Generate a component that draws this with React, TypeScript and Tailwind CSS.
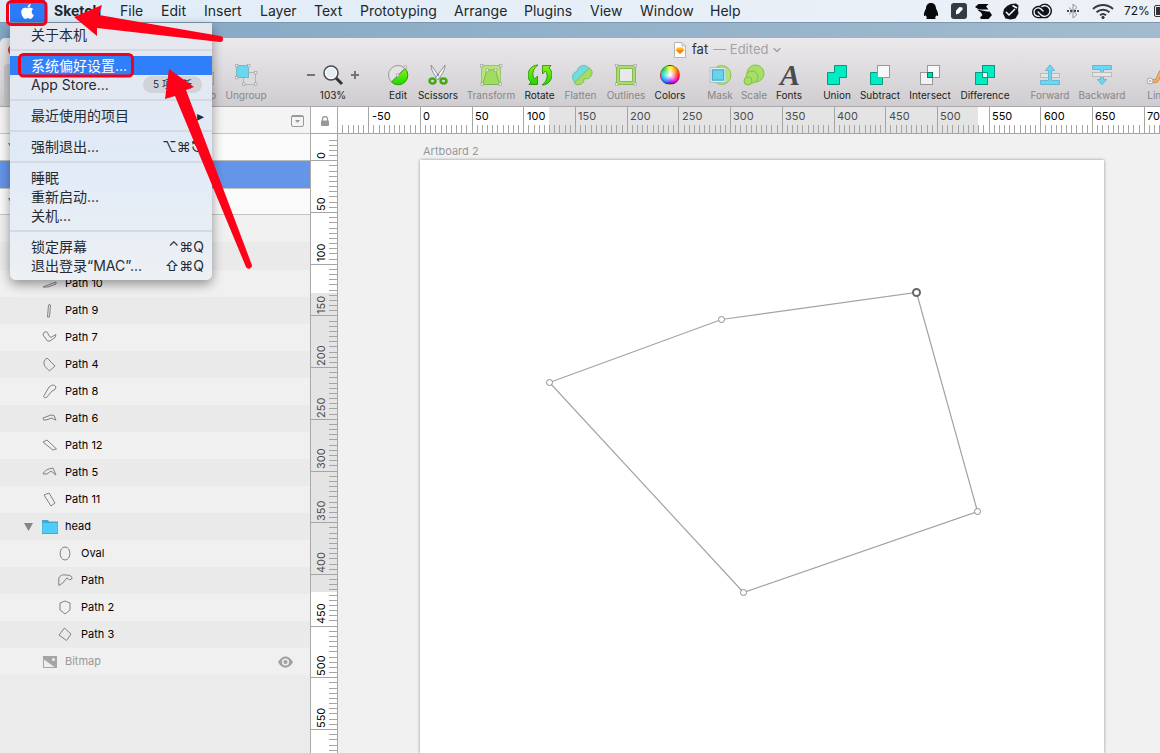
import React from "react";
import { FaApple } from "react-icons/fa";
import { SiAdobecreativecloud } from "react-icons/si";
import { ChevronDown } from "lucide-react";

const menus = [
  { label: "Sketch", cls: "w-[66px] font-bold" },
  { label: "File", cls: "w-[41px]" },
  { label: "Edit", cls: "w-[43px]" },
  { label: "Insert", cls: "w-[56px]" },
  { label: "Layer", cls: "w-[54px]" },
  { label: "Text", cls: "w-[46px]" },
  { label: "Prototyping", cls: "w-[94px]" },
  { label: "Arrange", cls: "w-[70px]" },
  { label: "Plugins", cls: "w-[66px]" },
  { label: "View", cls: "w-[50px]" },
  { label: "Window", cls: "w-[70px]" },
  { label: "Help", cls: "w-[40px]" },
];

function MenuBar() {
  return (
    <header className="flex h-[23px] items-center overflow-hidden whitespace-nowrap border-b border-[#7d97ae] bg-linear-to-r from-[#dfecf7] to-[#edf1f7] text-[14px] leading-[22px] text-[#20272e]">
      <button aria-label="Apple" className="ml-[10px] flex h-[22px] w-[35px] shrink-0 items-center justify-center bg-[#2b7bfb] text-white">
        <FaApple size={17} />
      </button>
      <nav className="ml-[9px] flex shrink-0">
        {menus.map((m) => (
          <button key={m.label} className={`text-left ${m.cls}`}>{m.label}</button>
        ))}
      </nav>
      <div className="ml-[173px] flex shrink-0 items-center text-[#11151a]">
        <svg width="16" height="18" viewBox="0 0 16 18" fill="#07090b" aria-hidden="true">
          <path d="M8 1C4.500 1 3 3.500 3 6.500c-1.500 3-2.500 5-2 7.500.6.300 1.300-.2 1.800-.8.200.9.600 1.500 1.200 2-1 .4-1 1.800.3 1.800H11.700c1.300 0 1.300-1.400.3-1.800.6-.5 1-1.100 1.200-2 .5.600 1.200 1.100 1.800.8.500-2.500-.5-4.500-2-7.500C13 3.500 11.500 1 8 1z" />
        </svg>
        <svg className="ml-[12px]" width="16" height="16" viewBox="0 0 16 16" aria-hidden="true">
          <rect width="16" height="16" rx="3" fill="#353b43" />
          <path d="M5 11.500V7.500L8.500 4l3 .5v2L8 10.500z" fill="#fff" />
        </svg>
        <svg className="ml-[8px]" width="17" height="16" viewBox="0 0 17 16" fill="#07090b" aria-hidden="true">
          <path d="M3.500 1h10L11 3.500 13.500 6.500H4L0 4z" />
          <path d="M2 6.500l10 2h2.500L17 12l-3.500 4H6l-1-1.500L7.500 12 6 9.500z" />
        </svg>
        <svg className="ml-[10px]" width="18" height="17" viewBox="0 0 18 17" aria-hidden="true">
          <path d="M5 3L9 1l5-.5 2.500 2-.5 4 .5 4-3 5-5 1-5-1-2.500-5 1-4.500z" fill="#101419" />
          <path d="M4 9l3 3 6-6M10.500 2.500L15 5" stroke="#fff" strokeWidth="1.500" fill="none" />
        </svg>
        <SiAdobecreativecloud className="ml-[12px]" size={20} />
        <svg className="ml-[15px]" width="12" height="16" viewBox="0 0 12 16" fill="none" stroke="#8f959b" aria-hidden="true">
          <path d="M2 4.500l8 7-4 3.500V1l4 3.500-8 7" />
          <path d="M0 8h2M3 8h2M7 8h2M10 8h2" stroke="#454b51" strokeWidth="2" />
        </svg>
        <svg className="ml-[13px]" width="22" height="17" viewBox="0 0 22 17" fill="none" stroke="#353a40" strokeWidth="2" aria-hidden="true">
          <path d="M1 6C7 .8 15 .8 21 6M4.500 9.300c3.800-3.400 9.200-3.400 13 0M8 12.300c1.800-1.500 4.200-1.500 6 0" />
          <circle cx="11" cy="14.500" r="1.200" fill="#353a40" strokeWidth="1" />
        </svg>
        <span className="ml-[10px] text-[12px]">72%</span>
        <span className="ml-[4px] h-[12px] w-[24px] shrink-0 rounded-[2px] border border-[#333] p-px"><span className="block h-full w-[14px] bg-[#333]" /></span>
      </div>
    </header>
  );
}

const node = (x: number, y: number) => <rect key={`${x}-${y}`} x={x - 1} y={y - 1} width="2.400" height="2.400" fill="#f1f1f1" stroke="#a5a3a6" strokeWidth=".7" />;

function ToolIcon({ name }: { name: string }) {
  const shapes: Record<string, React.ReactNode> = {
    Ungroup: (
      <g>
        <rect x="8.500" y="8.500" width="12" height="12" fill="#dcdbdc" stroke="#b5b4b6" />
        <rect x="1.500" y="1.500" width="12" height="12" fill="#67d8ef" stroke="#7ab6c3" />
        {node(1.5, 1.5)}{node(13.5, 1.5)}{node(1.5, 13.5)}{node(20.5, 8.5)}{node(8.5, 20)}{node(20.5, 20)}
      </g>
    ),
    Group: (
      <g><rect x="1.500" y="1.500" width="12" height="12" fill="#67d8ef" stroke="#7ab6c3" /><rect x="8.500" y="8.500" width="12" height="12" fill="#dcdbdc" stroke="#b5b4b6" /></g>
    ),
    Edit: (
      <g>
        <circle cx="11" cy="11" r="9.500" fill="#e4e3e4" stroke="#999" />
        <path d="M18 4.500A9.500 9.500 0 0 1 4.500 18z" fill="url(#green)" stroke="#27a500" />
        <path d="M4.500 18L18 4" stroke="#7a9a70" strokeWidth=".8" />
        {node(18, 3)}{node(10.5, 11)}
      </g>
    ),
    Scissors: (
      <g>
        <path d="M4 1l9.500 13-2 1.500C7 11 4 6 4 1z" fill="#edf0f1" stroke="#777d80" strokeWidth=".8" />
        <path d="M18 1L8.500 14l2 1.500C15 11 18 6 18 1z" fill="#f4f5f5" stroke="#777d80" strokeWidth=".8" />
        <ellipse cx="5.500" cy="17" rx="2.900" ry="2.500" fill="none" stroke="#43a813" strokeWidth="2.600" />
        <ellipse cx="16.500" cy="17" rx="2.900" ry="2.500" fill="none" stroke="#43a813" strokeWidth="2.600" />
        <circle cx="11" cy="11" r="1" fill="#777" />
      </g>
    ),
    Transform: (
      <g>
        <rect x="1.500" y="1.500" width="19" height="19" fill="#b4e577" stroke="#9bc270" />
        <path d="M7 6h8.500l4 14.500h-17z" fill="#a0dc61" stroke="#7fb550" />
        {node(1.5, 1.5)}{node(20.5, 1.5)}{node(7, 6)}{node(15.5, 6)}{node(2, 20)}{node(20, 20)}
      </g>
    ),
    Rotate: (
      <g fill="url(#green)" stroke="#24870b" strokeWidth=".8">
        <path d="M9 1C3 1-1 6-1 11c0 3 1 5.500 3 7l-2 2.500h8.500V12L5.500 15C3 12 3 5 9 1z" />
        <path d="M13 21c6 0 10-5 10-10 0-3-1-5.500-3-7l2-2.500h-8.500V10l3-3c2.500 3 2.500 10-3.500 14z" />
      </g>
    ),
    Flatten: (
      <g>
        <path d="M14 1.500a6 6 0 0 1 5 9 6 6 0 0 1-5 4 5.800 5.800 0 1 1-7-7 6.500 6.500 0 0 1 7-6z" fill="#70dce0" stroke="#65bfbd" />
        <path d="M19.500 4a6 6 0 0 1-5.500 10.500A5.800 5.800 0 0 1 4 19z" fill="#a4dc67" stroke="#82bd5c" />
      </g>
    ),
    Outlines: (
      <g>
        <rect x="3" y="3" width="16" height="16" fill="#e9e8e9" stroke="#7bb34f" strokeWidth="4" />
        <rect x="3" y="3" width="16" height="16" fill="none" stroke="#a8dd6d" strokeWidth="2.400" />
        {node(1.5, 1.5)}{node(20, 1.5)}{node(1.5, 20)}{node(20, 20)}
      </g>
    ),
    Mask: (
      <g>
        <circle cx="12.500" cy="11" r="9.500" fill="#b5e572" stroke="#8bc260" />
        <rect x="2" y="4.500" width="14" height="13" fill="#68d4ec" stroke="#a7b3b5" strokeWidth="2.600" />
        <rect x="2" y="4.500" width="14" height="13" fill="#68d4ec" stroke="#e0ecec" strokeWidth="1.200" />
        <rect x="3.500" y="6" width="11" height="10" fill="#68d4ec" stroke="#55a5cf" />
      </g>
    ),
    Scale: (
      <g fill="#a6df65" stroke="#82be51">
        <circle cx="12.500" cy="9.500" r="8.500" /><circle cx="9" cy="13" r="6" /><circle cx="5" cy="17" r="4" />
      </g>
    ),
    Union: <path d="M8.500 1.500h12v12h-7v7h-12v-12h7z" fill="#00edc4" stroke="#049b7e" />,
    Subtract: (
      <g><path d="M1.500 8.500h7v5h5v7h-12z" fill="#00edc4" stroke="#049b7e" /><rect x="8.500" y="1.500" width="12" height="12" fill="#f8f8f8" stroke="#999" /></g>
    ),
    Intersect: (
      <g><rect x="1.500" y="8.500" width="12" height="12" fill="#f2f2f2" stroke="#999" /><rect x="8.500" y="1.500" width="12" height="12" fill="#f8f8f8" stroke="#999" /><rect x="8.500" y="8.500" width="5" height="5" fill="#00dfb4" stroke="#067f68" /></g>
    ),
    Difference: (
      <g fill="#00edc4" stroke="#049b7e"><rect x="1.500" y="8.500" width="12" height="12" /><rect x="8.500" y="1.500" width="12" height="12" /><rect x="8.500" y="8.500" width="5" height="5" fill="#f6f8f8" /></g>
    ),
    Forward: (
      <g stroke="#67b8d1" fill="#67d8f5"><rect x="1.500" y="9.500" width="19" height="4" fill="#e5e5e6" stroke="#bbb" /><path d="M1.500 16.500h8v-10h-3L11 .8l4.500 5.700h-3v10h8v4h-19z" /></g>
    ),
    Backward: (
      <g stroke="#67b8d1" fill="#67d8f5"><path d="M1.500 1.500h19v4h-8v10h3L11 20.700l-4.500-5.200h3v-10h-8z" /><rect x="1.500" y="8.500" width="19" height="4" fill="#e5e5e6" stroke="#bbb" /></g>
    ),
    Link: (
      <g fill="none"><path d="M6 17c10 2 3-11 16-12" stroke="#c88647" strokeWidth="4" /><path d="M6 17c10 2 3-11 16-12" stroke="#f4ac64" strokeWidth="2.500" /><circle cx="4" cy="17" r="3" fill="#eee" stroke="#aaa" /><circle cx="4" cy="17" r="1" fill="#aaa" /></g>
    ),
  };
  if (name === "Colors")
    return <span className="h-[20px] w-[20px] rounded-full border border-black/30 bg-[radial-gradient(circle,#fff_5%,transparent_65%),conic-gradient(#ff3,#f90,#f22,#f0c,#60f,#28f,#0de,#2d4,#ff3)]" />;
  if (name === "Fonts")
    return <span className="pl-[2px] font-['Liberation_Serif',serif] text-[30px] font-bold italic leading-[22px] text-[#4b4b4e]">A</span>;
  return (
    <svg width="24" height="22" viewBox="-1 0 24 22" aria-hidden="true">
      <defs>
        <linearGradient id="green" x1="0" y1="0" x2="0" y2="1"><stop stopColor="#8bef1c" /><stop offset="1" stopColor="#19d900" /></linearGradient>
      </defs>
      {shapes[name]}
    </svg>
  );
}

const tools = [
  { name: "Edit", cls: "w-[34px] text-[#1c1c1e]" },
  { name: "Scissors", cls: "w-[46px] text-[#1c1c1e]" },
  { name: "Transform", cls: "w-[60px] text-[#88868a]" },
  { name: "Rotate", cls: "w-[37px] text-[#1c1c1e]" },
  { name: "Flatten", cls: "w-[45px] text-[#88868a]" },
  { name: "Outlines", cls: "w-[46px] text-[#88868a]" },
  { name: "Colors", cls: "w-[42px] text-[#1c1c1e]" },
  { name: "Mask", cls: "ml-[12px] w-[34px] text-[#88868a]" },
  { name: "Scale", cls: "w-[34px] text-[#88868a]" },
  { name: "Fonts", cls: "w-[36px] text-[#1c1c1e]" },
  { name: "Union", cls: "ml-[12px] w-[36px] text-[#1c1c1e]" },
  { name: "Subtract", cls: "w-[50px] text-[#1c1c1e]" },
  { name: "Intersect", cls: "w-[50px] text-[#1c1c1e]" },
  { name: "Difference", cls: "w-[60px] text-[#1c1c1e]" },
  { name: "Forward", cls: "ml-[12px] w-[46px] text-[#88868a]" },
  { name: "Backward", cls: "w-[58px] text-[#88868a]" },
  { name: "Link", cls: "w-[52px] text-[#88868a]" },
];

function Toolbar() {
  return (
    <div className="flex h-[69px] shrink-0 flex-col border-b border-[#aaa8aa] bg-linear-to-b from-[#ebe9eb] to-[#cfcdcf]">
      <div className="flex h-[23px] shrink-0 items-center pl-[8px] text-[13px] text-[#303033]">
        <button aria-label="Close" className="h-[12px] w-[12px] rounded-full border border-[#d03c3c] bg-[#f2585a]" />
        <svg className="ml-[654px]" width="12" height="16" viewBox="0 0 12 16" aria-hidden="true">
          <path d="M.5.500h7.500l3.500 3.500v11.500H.5z" fill="#fff" stroke="#b5b5b5" /><path d="M8 .5v3.500h3.500" fill="none" stroke="#b5b5b5" />
          <path d="M3.500 5.500h5L10.300 8 6 12 1.700 8z" fill="#fdb81e" /><path d="M1.700 8h8.600L6 12z" fill="#f88908" />
        </svg>
        <span className="ml-[6px]">fat</span>
        <span className="ml-[5px] text-[#a5a2a6]">— Edited</span>
        <ChevronDown className="ml-[3px] text-[#a5a2a6]" size={12} strokeWidth={3} />
      </div>
      <div className="flex h-[45px] shrink-0 whitespace-nowrap pl-[4px] pt-[3px] text-[10px] leading-[16px]">
        <div className="h-[42px] w-[171px] shrink-0 rounded-tl-[4px] bg-[#c9c7ca]" />
        <button className="flex w-[44px] shrink-0 flex-col items-end gap-[1px] pr-[3px] text-[#88868a]"><ToolIcon name="Group" /><span>Group</span></button>
        <button className="flex w-[54px] shrink-0 flex-col items-center gap-[1px] text-[#88868a]"><ToolIcon name="Ungroup" /><span>Ungroup</span></button>
        <div className="ml-[33px] flex w-[54px] shrink-0 flex-col items-center gap-[1px] text-[#1c1c1e]">
          <div className="flex h-[22px] items-center gap-[7px]">
            <button aria-label="Zoom out" className="h-[2px] w-[8px] bg-[#747477]" />
            <svg width="22" height="22" viewBox="0 0 22 22" aria-hidden="true"><path d="M14 14l6 6" stroke="#333" strokeWidth="3" /><circle cx="9" cy="9" r="7" fill="#e6edf5" stroke="#4b4c50" strokeWidth="1.500" /><circle cx="9" cy="9" r="5.500" fill="none" stroke="#fff" /></svg>
            <button aria-label="Zoom in"><svg width="8" height="8" viewBox="0 0 8 8"><path d="M0 4h8M4 0v8" stroke="#747477" strokeWidth="2" /></svg></button>
          </div>
          <span>103%</span>
        </div>
        <div className="ml-[21px] flex shrink-0">
          {tools.map((t) => (
            <button key={t.name} className={`flex shrink-0 flex-col items-center gap-[1px] ${t.cls}`}>
              <span className="flex h-[22px] items-center"><ToolIcon name={t.name} /></span>
              <span>{t.name}</span>
            </button>
          ))}
        </div>
      </div>
    </div>
  );
}

const layers = [
  { name: "Path 10", d: "M1 11l13-5v2L6 11z" },
  { name: "Path 9", d: "M6.500 2q2-1 2 0l-1 12h-2z" },
  { name: "Path 7", d: "M1 5q0-3 3-3.500Q6 2 6.500 5l2 2.500L14 4.500l-1 3-5 3.500q-3 1-4-2z" },
  { name: "Path 4", d: "M5 1l8 8-5.500 5L3 9.500Q0 4 5 1z" },
  { name: "Path 8", d: "M7 3q5-4 7 0 0 3-4 4l-5.500 6.500q-2 .8-3-1z" },
  { name: "Path 6", d: "M1 7l8-3 3 .5 2 4.500q-2 0-4-2L4 9q-3 1-3-2z" },
  { name: "Path 12", d: "M1 4l4-2 9.500 9-4 .8z" },
  { name: "Path 5", d: "M1 9q2-5 10-6l3 7-5-4-4 3z" },
  { name: "Path 11", d: "M2 3l5-2 6 10-4 3z" },
];
const headLayers = [
  { name: "Oval", d: "M7 1c6.500 0 6.500 13 0 13S.500 1 7 1z" },
  { name: "Path", d: "M.8 12.500V5q2-4 7-3 7 0 6 4-2 2-5-1l-4 5z" },
  { name: "Path 2", d: "M2 3l5-2 5 2v7l-5 4-5-4z" },
  { name: "Path 3", d: "M6.500 1l6.500 6-4.500 6.500L1 8z" },
];

function LayerRow({ name, d, index, cls }: { name: string; d: string; index: number; cls: string }) {
  return (
    <li className={`flex h-[27px] items-center gap-[8px] ${cls} ${index % 2 ? "bg-[#eaeaea]" : "bg-[#f0f0f0]"}`}>
      <svg width="15" height="15" viewBox="0 0 15 15" aria-hidden="true"><path d={d} fill="none" stroke="#818181" /></svg>
      <button>{name}</button>
    </li>
  );
}

function Sidebar() {
  return (
    <aside className="flex w-[311px] shrink-0 flex-col border-r border-[#aaa] bg-[#ebebeb] text-[11px] text-black">
      <div className="flex h-[27px] items-center justify-end border-b border-[#c5c5c5] bg-[#f4f4f4] pr-[6px] pt-[2px]">
        <button aria-label="Pages"><svg width="13" height="12" viewBox="0 0 13 12"><rect x=".5" y=".5" width="12" height="11" rx="1.500" fill="none" stroke="#999" /><path d="M1 1.500h11" stroke="#999" /><path d="M4 5h5L6.500 8z" fill="#999" /></svg></button>
      </div>
      <div className="flex h-[27px] items-center border-b border-[#bbb] bg-[#fafafa] pl-[8px]"><svg width="9" height="8" viewBox="0 0 9 8" aria-hidden="true"><path d="M0 0h9L4.500 8z" fill="#858585" /></svg></div>
      <div className="h-[28px] border-b border-[#c5c5c5] bg-[#6495e8]" />
      <div className="flex h-[26px] items-center border-b border-[#c5c5c5] bg-[#fafafa] pl-[8px]"><svg width="9" height="8" viewBox="0 0 9 8" aria-hidden="true"><path d="M0 0h9L4.500 8z" fill="#858585" /></svg></div>
      <div className="h-[27px] bg-[#f0f0f0]" />
      <div className="h-[28px] bg-[#eaeaea]" />
      <ul>
        {layers.map((l, i) => <LayerRow key={l.name} {...l} index={i} cls="pl-[42px]" />)}
        <li className="flex h-[27px] items-center bg-[#eaeaea] pl-[24px]">
          <svg width="9" height="8" viewBox="0 0 9 8" aria-hidden="true"><path d="M0 0h9L4.500 8z" fill="#858585" /></svg>
          <svg className="ml-[9px]" width="16" height="14" viewBox="0 0 16 14" aria-hidden="true"><path d="M0 0h6l1 1.500h9V14H0z" fill="#42a9d3" /><path d="M.5 3h15v10H.5z" fill="#4dcdfc" /></svg>
          <button className="ml-[7px]">head</button>
        </li>
        {headLayers.map((l, i) => <LayerRow key={l.name} {...l} index={i} cls="pl-[58px]" />)}
        <li className="flex h-[27px] items-center bg-[#f0f0f0] pl-[43px] pr-[17px] text-[#999]">
          <svg width="14" height="12" viewBox="0 0 14 12" aria-hidden="true"><path d="M0 0h14v12H0z" fill="#a5a5a5" /><path d="M1 3.500L11.500 11H1z" fill="#eee" /><circle cx="10.500" cy="3.500" r="1.500" fill="#eee" /></svg>
          <button className="ml-[8px]">Bitmap</button>
          <svg className="ml-auto" width="15" height="12" viewBox="0 0 15 12" aria-hidden="true"><path d="M0 6c4-7.500 11-7.500 15 0-4 7.500-11 7.500-15 0z" fill="#a0a0a0" /><circle cx="7.500" cy="6" r="3.600" fill="#eee" /><circle cx="7.500" cy="6" r="2" fill="#a0a0a0" /></svg>
        </li>
      </ul>
    </aside>
  );
}

const STEP = 51.7;

function TopRuler() {
  const ticks = Array.from({ length: 260 }, (_, i) => i);
  return (
    <svg className="block h-[26px] w-full" aria-label="Horizontal ruler">
      <rect width="100%" height="26" fill="#fff" />
      <rect x="211" width="429" height="26" fill="#e4e4e4" />
      <g stroke="#a5a5a5" shapeRendering="crispEdges">
        {ticks.map((i) => {
          const x = Math.round(30.2 + (i - 5) * (STEP / 10)) + 0.5;
          return <line key={i} x1={x} x2={x} y1={i % 10 === 5 ? 0 : 18} y2="26" />;
        })}
      </g>
      <g fontSize="11">
        {Array.from({ length: 16 }, (_, i) => {
          const value = (i - 1) * 50;
          return <text key={i} x={Math.round(33.5 + i * STEP)} y="13" fill={value > 100 && value < 550 ? "#4c4c4c" : "#000"}>{value}</text>;
        })}
      </g>
    </svg>
  );
}

function LeftRuler() {
  const ticks = Array.from({ length: 240 }, (_, i) => i);
  return (
    <svg className="block h-full min-h-0 w-[26px]" aria-label="Vertical ruler">
      <rect width="26" height="100%" fill="#fff" />
      <rect y="159" width="26" height="299" fill="#e4e4e4" />
      <g stroke="#a5a5a5" shapeRendering="crispEdges">
        {ticks.map((i) => {
          const y = Math.round(26.3 + (i - 4) * (STEP / 10)) + 0.5;
          return <line key={i} x1={i % 10 === 4 ? 0 : 18} x2="26" y1={y} y2={y} />;
        })}
      </g>
      <g fontSize="11">
        {Array.from({ length: 12 }, (_, i) => {
          const value = i * 50;
          return <text key={i} transform={`translate(14 ${Math.round(25 + i * STEP)}) rotate(-90)`} fill={value > 100 && value < 450 ? "#4c4c4c" : "#000"}>{value}</text>;
        })}
      </g>
    </svg>
  );
}

function Canvas() {
  return (
    <main className="grid min-w-0 flex-1 grid-cols-[27px_minmax(0,1fr)] grid-rows-[27px_minmax(0,1fr)] bg-[#f1f1f1]">
      <div className="flex items-center justify-center border-b border-r border-[#a5a5a5] bg-white pl-[2px] pt-[2px]">
        <svg width="8" height="10" viewBox="0 0 8 10" aria-hidden="true"><path d="M1.500 5V3a2.500 2.500 0 0 1 5 0v2" fill="none" stroke="#999" strokeWidth="1.300" /><rect y="4.500" width="8" height="5.500" rx=".8" fill="#999" /></svg>
      </div>
      <div className="overflow-hidden border-b border-[#a5a5a5]"><TopRuler /></div>
      <div className="overflow-hidden border-r border-[#a5a5a5]"><LeftRuler /></div>
      <section className="flex min-w-0 flex-col overflow-hidden pl-[82px] pr-[56px] pt-[9px]">
        <h1 className="pl-[3px] text-[11px] leading-[17px] text-[#999]">Artboard 2</h1>
        <div className="min-h-0 flex-1 bg-white shadow-[0_0_3px_rgba(0,0,0,0.4)]">
          <svg width="684" height="594" viewBox="420 160 684 594" className="block" aria-label="Polygon path">
            <path d="M549.500 382.500L721.500 319.500 916.500 292.500 977.500 511.500 743.500 592.500z" fill="none" stroke="#a3a3a3" strokeWidth="1.200" />
            <g fill="#fff" stroke="#8d8d8d">
              <circle cx="549.500" cy="382.500" r="3" /><circle cx="721.500" cy="319.500" r="3" /><circle cx="977.500" cy="511.500" r="3" /><circle cx="743.500" cy="592.500" r="3" />
              <circle cx="916.500" cy="292.500" r="3.500" stroke="#666" strokeWidth="2" />
            </g>
          </svg>
        </div>
      </section>
    </main>
  );
}

function Item({ label, keys, active }: { label: string; keys?: string; active?: boolean }) {
  return (
    <button className={`flex h-[19px] w-full items-center justify-between pl-[21px] pr-[8px] ${active ? "bg-[#2f7ffb] text-white" : ""}`}>
      <span>{label}</span>
      {keys && <span className="font-['Inter','DejaVu_Sans',sans-serif]">{keys}</span>}
    </button>
  );
}

const Rule = () => <div className="my-[5px] h-[2px] bg-[#d3dae2]" />;

function AppleMenu() {
  return (
    <div className="absolute left-[10px] top-[23px] w-[202px] rounded-b-[6px] bg-linear-to-b from-[#e6e7ed] via-[#e0eaf7] to-[#edf0f4] pb-[5px] pt-[2px] text-[14px] leading-[19px] text-[#262b32] shadow-[0_4px_12px_rgba(0,0,0,0.4)]">
      <Item label="关于本机" />
      <Rule />
      <Item label="系统偏好设置..." active />
      <div className="flex h-[19px] items-center justify-between pl-[21px] pr-[10px]">
        <button>App Store...</button>
        <span className="rounded-full bg-[#d0d4d9] px-[10px] text-[10px] leading-[17px]">5 项更新</span>
      </div>
      <Rule />
      <Item label="最近使用的项目" keys="▸" />
      <Rule />
      <Item label="强制退出..." keys="⌥⌘⎋" />
      <Rule />
      <Item label="睡眠" />
      <Item label="重新启动..." />
      <Item label="关机..." />
      <Rule />
      <Item label="锁定屏幕" keys="⌃⌘Q" />
      <Item label="退出登录“MAC”..." keys="⇧⌘Q" />
    </div>
  );
}

function Annotations() {
  return (
    <svg className="pointer-events-none absolute left-0 top-0" width="260" height="280" viewBox="0 0 260 280" aria-hidden="true">
      <g fill="none" stroke="#f40018" strokeWidth="3">
        <rect x="7.500" y="1.500" width="38.500" height="23" rx="4" />
        <rect x="19.500" y="54.500" width="113" height="21.500" rx="4" />
      </g>
      <g fill="#ff0018">
        <path d="M74 17L102 5l-3 10 121 21a2.600 2.600 0 0 1 0 6L97 28l0 8z" />
        <path d="M169 69l25 18-8 3 65.500 174a3 3 0 0 1-5.500 3L175 96l-10 3z" />
      </g>
    </svg>
  );
}

export default function App() {
  return (
    <div className="relative flex h-screen flex-col overflow-hidden bg-linear-to-r from-[#83a7c5] to-[#a2bbce] font-['Inter','Noto_Sans_CJK_SC',sans-serif]">
      <MenuBar />
      <div className="mt-[15px] flex min-h-0 flex-1 flex-col overflow-hidden rounded-tl-[5px]">
        <Toolbar />
        <div className="flex min-h-0 flex-1">
          <Sidebar />
          <Canvas />
        </div>
      </div>
      <AppleMenu />
      <Annotations />
    </div>
  );
}
